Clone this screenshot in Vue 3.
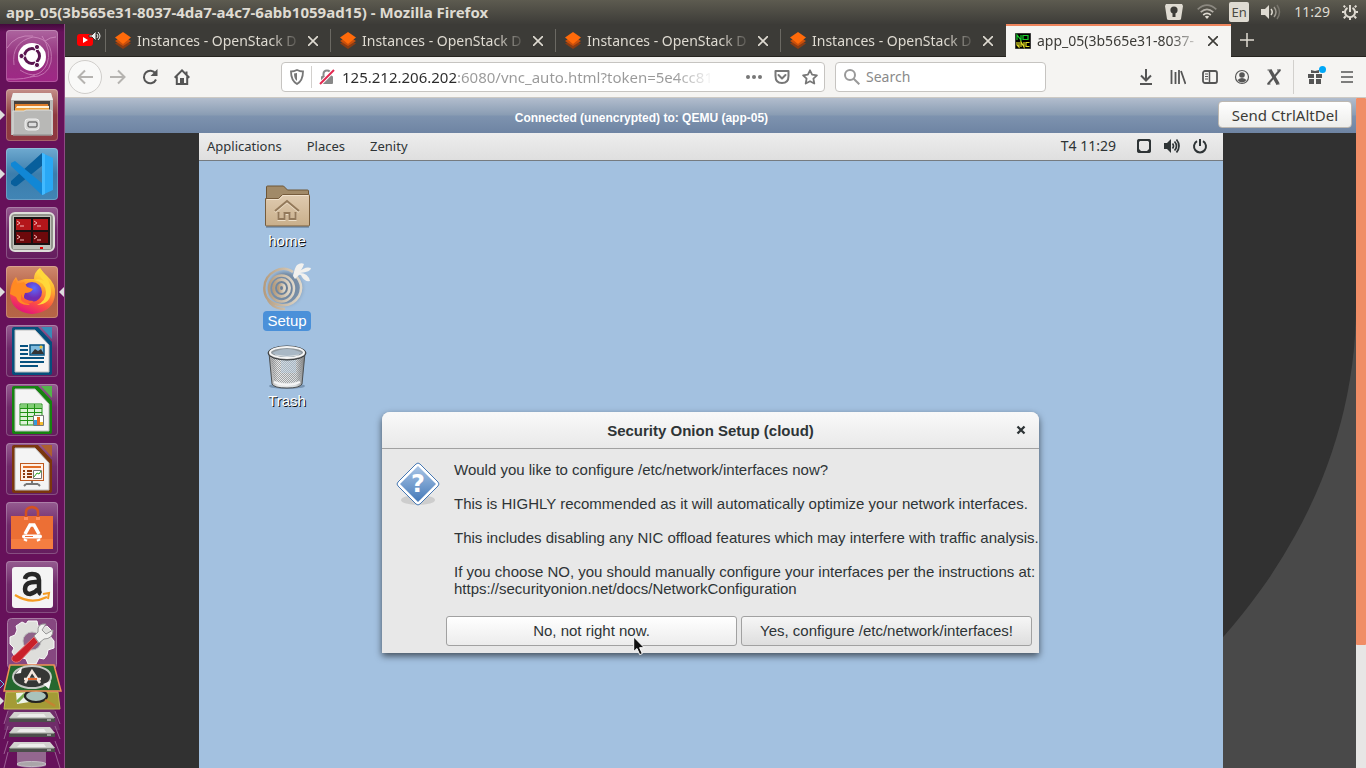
<script setup>
import { ref } from 'vue'

const openTabs = [1, 2, 3, 4]
const address = ref('125.212.206.202:6080/vnc_auto.html?token=5e4cc81e')
const search = ref('')
const message = [
  'Would you like to configure /etc/network/interfaces now?',
  'This is HIGHLY recommended as it will automatically optimize your network interfaces.',
  'This includes disabling any NIC offload features which may interfere with traffic analysis.',
]
</script>

<template>
  <div class="session">
    <header class="topbar">
      <h1 class="window-title">app_05(3b565e31-8037-4da7-a4c7-6abb1059ad15) - Mozilla Firefox</h1>
      <div class="indicators">
        <svg width="18" height="18" viewBox="0 0 18 18"><path d="M1 1h16l1 2-2 13q0 1-2 1H4q-2 0-2-1L0 3z" fill="#dfdbd2" /><circle cx="9" cy="7" r="3.6" fill="#3c3b37" /><path d="M7.500 9h3v5h-3z" fill="#3c3b37" /></svg>
        <svg class="wifi" width="20" height="16" viewBox="0 0 20 16" fill="none" stroke="#dfdbd2" stroke-width="1.7"><path d="M.7 5.4Q10-3 19.3 5.4" stroke="#8b8880" /><path d="M3.700 8.200Q10 2.600 16.300 8.200" stroke="#b5b1a9" /><path d="M6.200 11Q10 7.600 13.800 11" /><path d="M7.800 12.600 10 15l2.200-2.400Q10 11.100 7.800 12.600Z" fill="#dfdbd2" stroke="none" /></svg>
        <span class="lang">En</span>
        <svg class="volume" width="20" height="16" viewBox="0 0 20 16" fill="none" stroke-width="1.5"><path d="M0 5h4l4-4v14l-4-4H0z" fill="#dfdbd2" /><path d="M10 5q2.400 3 0 6" stroke="#dfdbd2" /><path d="M13 3q4 5 0 10" stroke="#a09c93" /><path d="M16 1q5 7 0 14" stroke="#77746c" /></svg>
        <time>11:29</time>
        <svg width="16" height="16" viewBox="0 0 16 16" fill="none" stroke="#dfdbd2"><path d="M5.500 3.800A5 5 0 1 0 10.500 3.800M8 1v7" stroke-width="2" /><path d="M3.200 3.200 1.600 1.600M12.800 3.200l1.600-1.600M2.600 8H0M13.400 8H16M3.700 12.300l-1.900 1.900M12.300 12.300l1.900 1.900M8 13.500V16" stroke-width="2" /></svg>
      </div>
    </header>

    <div class="workspace">
      <nav class="launcher" aria-label="Launcher">
        <button class="tile dash" aria-label="Search your computer">
          <svg viewBox="0 0 52 52"><g fill="none" stroke="#e3a9d4" opacity=".55"><path d="M8 35Q5 12 27 7q21 2 18 25Q42 47 24 47" /><path d="M14 40q18 12 27-6 5-13-5-28" /><path d="M1 49Q20 50 29 45M1 18Q10 4 27 6M50 7q-6 0-11 4" /></g><circle cx="26" cy="27" r="14" fill="#fff" /><circle cx="26" cy="26" r="7.500" fill="none" stroke="#5a1550" stroke-width="3" /><path d="m26 26-11 0M26 26l6-10M26 26l6 10" stroke="#fff" stroke-width="1.200" /><circle cx="26" cy="26" r="5.500" fill="#fff" /><g fill="#5a1550" stroke="#fff"><circle cx="15.500" cy="26" r="2.600" /><circle cx="31" cy="17" r="2.600" /><circle cx="31" cy="35" r="2.600" /></g></svg>
        </button>
        <button class="tile files running" aria-label="Files">
          <svg viewBox="0 0 52 52"><path d="M7 4h38l2 7v35H5V11z" fill="#b9b9b7" /><path d="M7 4h38l2 7H5z" fill="#efefec" /><path d="M8 12h36v12H8z" fill="#46413d" /><path d="M9 15h33l1 7H9z" fill="#de7d2a" /><path d="M11 17h32v2H10z" fill="#fff2d8" /><path d="M9 19h34v3H9z" fill="#f0a33d" /><path d="M7 22h11l2-1h24l2 1v24H7z" fill="#b8b8b6" stroke="#dededb" /><path d="M7 46h39" stroke="#777" /><rect x="19" y="30" width="14" height="11" rx="3" fill="#d8d8d6" stroke="#efefef" /><rect x="22" y="33" width="9" height="5" rx="1" fill="#ddd" stroke="#444" /></svg>
        </button>
        <button class="tile code running" aria-label="Visual Studio Code">
          <svg viewBox="0 0 52 52"><path d="m36 5 11 5v32l-11 5z" fill="#29a8f5" /><path d="M36 5 5 33v3l3 2q2 1 4-1L37 17z" fill="#075f9c" /><path d="m36 47-31-29v-3l4-2 28 23z" fill="#1187d5" /><path d="M36 5v42l3-1V6z" fill="#42baff" /></svg>
        </button>
        <button class="tile terminator" aria-label="Terminator">
          <svg viewBox="0 0 52 52"><rect x="4" y="6" width="44" height="38" rx="5" fill="#92948c" stroke="#deded9" stroke-width="2" /><path d="M7 9h38v33H7z" fill="#c0c2ba" /><path d="M8 10h36v28H8z" fill="#191112" /><path d="M10 12h15v11H10zM27 12h15v11H27z" fill="#b4161a" /><path d="M10 25h15v11H10zM27 25h15v11H27z" fill="#6d090b" /><path d="m11 14 3 2-3 2M28 14l3 2-3 2M11 28l3 2-3 2M28 28l3 2-3 2M14 19h4M31 19h4M14 33h4M31 33h4" stroke="#f3b4b4" fill="none" /><path d="M34 41h3" stroke="#d00" stroke-width="2" /></svg>
        </button>
        <button class="tile firefox running focused" aria-label="Firefox">
          <svg viewBox="0 0 52 52"><defs><linearGradient id="fxBody" x1=".8" y1="0" x2=".4" y2="1"><stop stop-color="#fff44f" /><stop offset=".35" stop-color="#ffb32d" /><stop offset=".7" stop-color="#ff563d" /><stop offset="1" stop-color="#e4157a" /></linearGradient><radialGradient id="fxGlobe" cx=".6" cy=".3"><stop stop-color="#5a6dff" /><stop offset="1" stop-color="#722bb2" /></radialGradient></defs><path d="M34 2q2 4 7 8 9 8 8 18-1 18-23 20-21-2-22-20 0-10 6-17l2 4 7-2 9 0Q28 6 34 2Z" fill="url(#fxBody)" /><circle cx="26" cy="26" r="10" fill="url(#fxGlobe)" /><path d="M4 28q1-10 6-15l1 5 7-2 3 5 6 2q-2 4-8 4-4 7 5 12-11 1-14-8Z" fill="#ff8a22" /><path d="M28 14q11 2 12 12 0 9-9 13 14-1 14-14Q45 15 34 2q-3 7 4 13-4-3-10-1Z" fill="#ffd83a" /><path d="M15 28q2 7 13 7-7 6-13-1Z" fill="#ff6534" /></svg>
        </button>
        <button class="tile" aria-label="LibreOffice Writer">
          <svg viewBox="0 0 52 52"><path d="M8 2h24l14 15v31q0 2-2 2H8q-2 0-2-2V4q0-2 2-2Z" fill="#064f7c" /><path d="M35 2h11v12z" fill="#398ab7" /><path d="M9 5h20l14 15v27H9z" fill="#f4f4f4" stroke="#bbb" /><path d="M14 21h8M14 25h8M14 29h8M14 33h24M14 37h24M14 41h18" stroke="#07527f" stroke-width="2" /><path d="M24 20h14v10H24z" fill="#7dbbde" stroke="#07527f" stroke-width="1.500" /><path d="m25 29 4-5 3 2 3-2 3 5z" fill="#333" /><circle cx="35" cy="22" r="1.500" fill="#f2c12e" /></svg>
        </button>
        <button class="tile" aria-label="LibreOffice Calc">
          <svg viewBox="0 0 52 52"><path d="M8 2h24l14 15v31q0 2-2 2H8q-2 0-2-2V4q0-2 2-2Z" fill="#168310" /><path d="M35 2h11v12z" fill="#54b44a" /><path d="M9 5h20l14 15v27H9z" fill="#f4f4f4" stroke="#bbb" /><path d="M14 20h22v21H14z" fill="#dcf2d6" stroke="#1f9114" /><path d="M15 21h20v3H15z" fill="#80cf73" /><path d="M14 24.500h22M14 28.500h22M14 32.500h22M14 36.500h22M21.500 20v21M28.500 20v21" stroke="#1f9114" /><path d="M27.500 31.500h10v10h-10z" fill="#fff" stroke="#777" /><path d="M28 36h3v5h-3z" fill="#3498db" /><path d="M31 33h3v8h-3z" fill="#e56b23" /><path d="M34 38h3v3h-3z" fill="#f5bd2f" /></svg>
        </button>
        <button class="tile" aria-label="LibreOffice Impress">
          <svg viewBox="0 0 52 52"><path d="M8 2h24l14 15v31q0 2-2 2H8q-2 0-2-2V4q0-2 2-2Z" fill="#7b360d" /><path d="M35 2h11v12z" fill="#ad6030" /><path d="M9 5h20l14 15v27H9z" fill="#f4f4f4" stroke="#bbb" /><rect x="14.500" y="20.500" width="23" height="17" fill="#fff0e5" stroke="#be581e" /><path d="M17 24h18" stroke="#e06c25" stroke-width="2" /><path d="M17 28h2M17 31h2M17 34h2M21 28h5M21 31h5M21 34h5" stroke="#8d3a0c" stroke-width="2" /><path d="M27.500 27.500h8v8h-8z" fill="#fff" stroke="#777" /><path d="m28 34 3-4 2 1 2-3" stroke="#27a521" fill="none" /><path d="M26 38v3M20 41h12M20 41l-2 2M32 41l2 2" stroke="#777" stroke-width="2" /></svg>
        </button>
        <button class="tile" aria-label="Ubuntu Software">
          <svg viewBox="0 0 52 52"><path d="M5 14h42v33H5z" fill="#ec6f35" /><path d="M5 37h42v10H5z" fill="#f57e41" /><path d="M20 18v-8q0-4 6-5 6 1 6 5v8" fill="none" stroke="#d45120" stroke-width="2.500" /><path d="M18 15h4v3h-4zM30 15h4v3h-4z" fill="#ff9060" /><path d="m19 32 5-9h4l5 9M19 39l1-2M33 39l-1-2" fill="none" stroke="#fff" stroke-width="3.500" /><path d="M18 34.500h16" stroke="#fff" stroke-width="4" stroke-linecap="round" /><path d="M19 34.500h8" stroke="#ec6f35" /></svg>
        </button>
        <button class="tile" aria-label="Amazon">
          <svg viewBox="0 0 52 52"><rect x="6" y="6" width="41" height="41" rx="3" fill="#f4f4f4" /><path d="M19 18q1-5 7-5 7 0 7 6v10q0 3 2 4" fill="none" stroke="#272727" stroke-width="4.500" /><path d="M32 21q-13-1-13 7 0 5 5 5 5-1 8-5" fill="none" stroke="#272727" stroke-width="4.500" /><path d="M9 34q16 10 32 2" fill="none" stroke="#f59b22" stroke-width="2.200" /><path d="m37 33 6-1-1 6" fill="none" stroke="#f59b22" stroke-width="2" /></svg>
        </button>
        <div class="stack">
          <svg viewBox="0 0 65 150" width="65" height="150" role="img" aria-label="Folded launcher items">
            <path d="M17 131h29v17q-14 4-29 0z" fill="#94678f" /><ellipse cx="31.500" cy="146" rx="14.500" ry="2.500" fill="#aaa5a9" stroke="#c5bdc5" />
            <path d="M8 134 4 150M55 134l5 16" stroke="#9b6094" />
            <g transform="translate(0 -4)">
              <rect x="7.500" y="4.500" width="49" height="50" rx="4" fill="#864780" stroke="#a87ca4" />
              <path d="m28 7 9 0 1 5 5 2 4-2 5 5-2 5 4 5v7l-6 2-1 5-3 4-5-1-3 6h-8l-2-5-6-2-4 1-4-6 2-4-4-4v-7l5-2 2-5-1-4 6-4 4 2z" fill="#dededb" stroke="#fafafa" />
              <circle cx="32" cy="27" r="9" fill="#8f6389" stroke="#bbb" />
              <path d="M12 46q-1-4 3-5l19-18 4 5-18 19q-5 3-8-1Z" fill="#c9202a" stroke="#e56d70" />
              <path d="m34 22 4-4q-1-9 8-8l-4 6 4 4 7-4q0 9-9 9l-5 4z" fill="#f0f0ee" stroke="#999" />
              <path d="M8 94h46l6 22H4z" fill="#6f2c69" />
              <g v-for="y in [97, 112, 127]" :key="y" :transform="`translate(0 ${y})`"><path d="M8 0 4 13M55 0l5 13" stroke="#9b6094" /><path d="M14 1h36l5 6H9z" fill="#d2d3cf" /><path d="M20 3h24l2 3H17z" fill="#ededeb" /><path d="M9 7h46v4H9z" fill="#4c4e4b" /><path d="M10 7h44" stroke="#b8bbb4" /><path d="M47 9h4" stroke="#eee" /></g>
              <path d="M6 78h52l2 17H4z" fill="#a49b36" stroke="#c4bc58" />
              <path d="m16 79 18-1 2 9-19 3z" fill="#eef3e8" /><path d="m17 88 7-7 5 5 5-6" stroke="#72a84a" stroke-width="3" fill="none" />
              <ellipse cx="36" cy="82" rx="11" ry="6" fill="#a9c3bb" stroke="#222" stroke-width="2.200" /><path d="m45 86 10 6" stroke="#c48432" stroke-width="2.500" />
              <path d="M10 51h44l7 26H4z" fill="#25672e" stroke="#ef9256" stroke-width="1.500" />
              <ellipse cx="32" cy="63" rx="19" ry="11" fill="#353735" stroke="#c6c9c4" stroke-width="2" />
              <path d="m25 69 7-12 8 12M24 65h17" stroke="#f3e6dd" stroke-width="2.500" fill="none" /><path d="M28 65h9" stroke="#e7682f" stroke-width="2" />
              <path d="m15 60 7-7-1 6zM43 70l8-3-2 8z" fill="#f5f5f5" />
              <path d="m0 66 4 4-4 4" fill="none" stroke="#64c7e8" /><path d="m0 83 4 4-4 4z" fill="#ddd" />
            </g>
          </svg>
        </div>
      </nav>

      <main class="browser">
        <div class="tabs">
          <button class="pinned" aria-label="YouTube, playing audio">
            <svg width="24" height="18" viewBox="0 0 24 18"><rect x="0" y="4" width="16" height="12" rx="3" fill="#f00" /><path d="m6 7 5 3-5 3z" fill="#fff" /><path d="M12 5h3l4-4v10l-4-4h-3z" fill="#eee" stroke="#353430" /><path d="M20 4q2 2 0 4M21 2q4 4 0 8" fill="none" stroke="#eee" /></svg>
          </button>
          <div v-for="tab in openTabs" :key="tab" class="tab">
            <svg width="16" height="18" viewBox="0 0 16 18"><path d="m8 7 8 4.500L8 17l-8-5.500z" fill="#8a3c13" /><path d="m8 4 8 5-8 5-8-5z" fill="#c94f0c" /><path d="m8 0 8 5.500L8 12 0 5.500z" fill="#ff6a0a" /></svg>
            <span>Instances - OpenStack D</span>
            <button class="close" aria-label="Close tab"><svg width="10" height="10" viewBox="0 0 10 10"><path d="m0 0 10 10M10 0 0 10" /></svg></button>
          </div>
          <div class="tab active">
            <svg width="16" height="16" viewBox="0 0 16 16" fill="none"><path d="M0 0h16v16H0z" fill="#000" stroke="#777" /><path d="M2 7V2l4 5V2M8 2.500h5v4H8z" stroke="#19d12b" stroke-width="1.200" /><path d="M2 9v3l2 2V9M6 14V9l3 5V9M14.500 9.500H11v4h3.500" stroke="#e2dc24" stroke-width="1.200" /></svg>
            <span>app_05(3b565e31-8037-</span>
            <button class="close" aria-label="Close tab"><svg width="10" height="10" viewBox="0 0 10 10"><path d="m0 0 10 10M10 0 0 10" /></svg></button>
          </div>
          <button class="newtab" aria-label="New tab"><svg width="14" height="14" viewBox="0 0 14 14"><path d="M7 0v14M0 7h14" stroke="#dfdbd2" stroke-width="1.500" /></svg></button>
        </div>

        <div class="toolbar">
          <button class="back" aria-label="Back"><svg class="ic" viewBox="0 0 16 16"><path d="M16 8H2M8 1.500 1.500 8 8 14.500" /></svg></button>
          <button class="tool faint" aria-label="Forward"><svg class="ic" viewBox="0 0 16 16"><path d="M0 8h14M8 1.500 14.500 8 8 14.500" /></svg></button>
          <button class="tool" aria-label="Reload"><svg class="ic" viewBox="0 0 16 16"><path d="M13.500 4.500A6.300 6.300 0 1 0 14 10.500" /><path d="M15.500 0v7h-7z" fill="#555" stroke="none" /></svg></button>
          <button class="tool" aria-label="Home"><svg class="ic" viewBox="0 0 16 16"><path d="M.7 8.700 8 1.400l7.300 7.300M2.800 7.500V15h10.400V7.500" /><path d="M6 9h4v6H6z" fill="#555" stroke="none" /><path d="M12.500 2.500v3" /></svg></button>

          <div class="field address">
            <svg width="14" height="16" viewBox="0 0 14 16" fill="none" stroke="#777" stroke-width="1.800"><path d="M7 1q3 1.500 6 1.500 0 9-6 12.500Q1 11.500 1 2.500 4 2.500 7 1Z" /><path d="M7 4v8q-3-2-3-7.500z" fill="#777" stroke="none" /></svg>
            <i class="rule"></i>
            <svg width="16" height="16" viewBox="0 0 16 16" fill="none"><path d="M4.500 8V5q0-3.500 3.500-3.500T11.500 5v3" stroke="#888" stroke-width="2" /><rect x="2" y="7" width="12" height="8" rx="1" fill="#888" /><path d="M1 15 15 1" stroke="#fff" stroke-width="4" /><path d="M1 15 15 1" stroke="#e22850" stroke-width="2" /></svg>
            <input v-model="address" aria-label="Address" spellcheck="false">
            <button aria-label="Page actions"><svg width="16" height="16" viewBox="0 0 16 16" fill="#777"><circle cx="2" cy="8" r="2" /><circle cx="8" cy="8" r="2" /><circle cx="14" cy="8" r="2" /></svg></button>
            <button aria-label="Save to Pocket"><svg width="16" height="16" viewBox="0 0 16 16" fill="none" stroke="#777" stroke-width="2" stroke-linecap="round" stroke-linejoin="round"><path d="M1.500 2h13v5q0 7-6.500 7T1.500 7z" /><path d="m4.500 6 3.500 3.500L11.500 6" /></svg></button>
            <button aria-label="Bookmark this page"><svg width="16" height="16" viewBox="0 0 16 16" fill="none" stroke="#777" stroke-width="1.800" stroke-linejoin="round"><path d="m8 1.300 2.100 4.300 4.800.7-3.500 3.400.9 4.800L8 12.200l-4.300 2.300.9-4.800L1.100 6.300l4.800-.7z" /></svg></button>
          </div>
          <div class="field search">
            <svg width="16" height="16" viewBox="0 0 16 16" fill="none" stroke="#999" stroke-width="2"><circle cx="6" cy="6" r="5" /><path d="m9.700 9.700 5.600 5.600" /></svg>
            <input v-model="search" aria-label="Search" placeholder="Search">
          </div>

          <div class="tools">
            <button class="tool" aria-label="Downloads"><svg class="ic" viewBox="0 0 16 16"><path d="M8 0v11M3 6.500 8 11.500l5-5M2 15h12" /></svg></button>
            <button class="tool" aria-label="Library"><svg class="ic" viewBox="0 0 16 16"><path d="M1.500 1v14M5.500 3v12M9 1v14M11 2l4.500 13" stroke-width="1.800" /></svg></button>
            <button class="tool" aria-label="Sidebars"><svg class="ic" viewBox="0 0 16 16"><rect x="1" y="2" width="14" height="12" rx="2" stroke-width="1.800" /><path d="M7.500 2v12" stroke-width="1.500" /><path d="M3 5h3M3 7.500h3M3 10h3" stroke-width="1" /></svg></button>
            <button class="tool" aria-label="Account"><svg class="ic" viewBox="0 0 16 16"><circle cx="8" cy="8" r="6.500" stroke-width="1.200" /><circle cx="8" cy="6" r="2.800" fill="#555" stroke="none" /><path d="M3.500 11q4.500-4 9 0-4.500 5-9 0Z" fill="#555" stroke="none" /></svg></button>
            <button class="tool" aria-label="Extension"><svg class="ic" viewBox="0 0 16 16"><path d="M4 1 12 15" stroke-width="3.500" /><path d="M14 1 2 15" stroke-width="2" /><path d="M1.500 1h4M11 1h4M1 15h3.500M10 15h3.500" stroke-width="1.200" /></svg></button>
            <i class="rule tall"></i>
            <button class="tool gift" aria-label="What's new"><svg class="ic" viewBox="0 0 16 16"><path d="M1 5h6v4H1zM9 5h6v4H9zM2 10h5v5H2zM9 10h5v5H9zM4 1l4 1 4-1v3H4z" fill="#555" stroke="none" /></svg></button>
            <button class="tool" aria-label="Menu"><svg class="ic" viewBox="0 0 16 16"><path d="M2 3h12M2 8h12M2 13h12" stroke-width="1.700" /></svg></button>
          </div>
        </div>

        <div class="viewport">
          <div class="page">
            <div class="statusbar">
              <p>Connected (unencrypted) to: QEMU (app-05)</p>
              <button>Send CtrlAltDel</button>
            </div>
            <div class="container">
              <section class="desktop">
                <div class="panel">
                  <button>Applications</button>
                  <button>Places</button>
                  <button>Zenity</button>
                  <time>T4 11:29</time>
                  <svg width="16" height="16" viewBox="0 0 16 16" fill="none" stroke="#2e3436" stroke-width="2"><rect x="2" y="2" width="12" height="12" rx="1" /><path d="M2 12v2h2v-2zM12 12v2h2v-2zM2 5V2h2zM14 5V2h-2z" fill="#2e3436" stroke-width="1" /></svg>
                  <svg width="16" height="16" viewBox="0 0 16 16" fill="none" stroke="#2e3436" stroke-width="1.700"><path d="M0 5h3l4-4v14l-4-4H0z" fill="#2e3436" stroke="none" /><path d="M8.500 5.500q2 2.500 0 5M10.500 3.500q4 4.500 0 9M12.500 1.500q5 6.500 0 13" /></svg>
                  <svg width="16" height="16" viewBox="0 0 16 16" fill="none" stroke="#2e3436" stroke-width="2"><path d="M5 3.200a6 6 0 1 0 6 0M8 1v7" /></svg>
                </div>

                <div class="shortcuts">
                  <button class="shortcut">
                    <svg width="48" height="48" viewBox="0 0 48 48"><defs><linearGradient id="folderFront" x2="0" y2="1"><stop stop-color="#dfcbb0" /><stop offset="1" stop-color="#c9af8b" /></linearGradient></defs><path d="M3 45h43" stroke="#55708e" opacity=".5" stroke-width="2" /><path d="M3.500 26V5q0-1 1-1h16l4 4h20q1 0 1 1v17z" fill="#a18a68" stroke="#6e5636" /><path d="M2.500 16.500h13l4-4h26q1 0 1 1V43q0 1-1 1h-42q-1 0-1-1z" fill="url(#folderFront)" stroke="#765c3c" /><path d="M4 17.500h12l4-4h25" stroke="#f1e2cd" fill="none" /><g fill="none" stroke-width="2"><path d="m12 30 12-10 12 10M15.500 31v7h6v-6h5v6h6v-7" stroke="#eddfc9" /><path d="m12 29 12-10 12 10M15.500 30v7h6v-6h5v6h6v-7" stroke="#93795a" /></g></svg>
                    <span>home</span>
                  </button>
                  <button class="shortcut selected">
                    <svg width="48" height="48" viewBox="0 0 48 48"><defs><radialGradient id="onionHaze"><stop stop-color="#66798f" /><stop offset=".65" stop-color="#7990a9" /><stop offset="1" stop-color="#a4c2e0" stop-opacity="0" /></radialGradient><linearGradient id="onionRing"><stop stop-color="#b59c7e" /><stop offset="1" stop-color="#dfd8cb" /></linearGradient></defs><path d="M0 4h44v44H0z" fill="url(#onionHaze)" /><g fill="none" stroke="url(#onionRing)"><ellipse cx="18.500" cy="26" rx="3" ry="3.500" stroke-width="3" /><ellipse cx="18.500" cy="26" rx="8" ry="8.500" stroke-width="3" /><ellipse cx="18.500" cy="26.500" rx="12.500" ry="13" stroke-width="2.500" /><path d="M31 12q11 10 5 22-7 11-19 9Q3 41 1.500 29 0 15 12 9q10-5 18 1M5 38q5 9 17 9" stroke-width="2.500" /></g><path d="M30 14q2-9 4-11 4-3 7-1-2 6-5 8 6-6 12-4 0 4-11 5 8 0 10 8-5 1-8-4-1-3-3-2l-4 4z" fill="#f2f1ee" /></svg>
                    <span>Setup</span>
                  </button>
                  <button class="shortcut">
                    <svg width="48" height="48" viewBox="0 0 48 48"><defs><pattern id="mesh" width="2" height="2" patternUnits="userSpaceOnUse"><path d="M0 0h1v1H0zM1 1h1v1H1z" fill="#85888a" /></pattern><linearGradient id="bin"><stop stop-color="#999" /><stop offset=".25" stop-color="#e8e8e8" /><stop offset=".75" stop-color="#d9dddf" /><stop offset="1" stop-color="#777" /></linearGradient></defs><ellipse cx="24" cy="44" rx="18" ry="3" fill="#425b75" opacity=".45" /><path d="m6 11 3 31q2 4 15 4t15-4l3-31z" fill="url(#bin)" stroke="#4c5052" /><path d="m8 14 3 24q3 3 13 3t13-3l3-24z" fill="url(#mesh)" opacity=".7" /><path d="M18 18h15v13H18z" fill="#b5cbe0" opacity=".45" /><path d="M11 40q13 6 26 0" fill="none" stroke="#f5f5f5" stroke-width="2" /><ellipse cx="24" cy="11" rx="19" ry="7" fill="#777" stroke="#34383a" /><ellipse cx="24" cy="10.500" rx="17" ry="5.500" fill="#8f979c" stroke="#f5f5f5" stroke-width="2" /><path d="M9 11q15-8 30 0-15 8-30 0Z" fill="#a9b8c5" /><path d="M12 13q12 3 24 0" stroke="#d7dde1" fill="none" /></svg>
                    <span>Trash</span>
                  </button>
                </div>

                <div class="dialog" role="dialog" aria-labelledby="dialog-title">
                  <div class="dialog-head">
                    <h2 id="dialog-title">Security Onion Setup (cloud)</h2>
                    <button aria-label="Close"><svg width="10" height="10" viewBox="0 0 10 10"><path d="m1.500 1.500 7 7M8.500 1.500l-7 7" stroke="#2e3436" stroke-width="2.300" /></svg></button>
                  </div>
                  <div class="dialog-body">
                    <svg width="48" height="48" viewBox="0 0 48 48"><defs><linearGradient id="askFill" x2="0" y2="1"><stop stop-color="#a9c5e6" /><stop offset="1" stop-color="#4479b8" /></linearGradient></defs><ellipse cx="24" cy="40" rx="17" ry="5" fill="#bbb" opacity=".6" /><path d="m22 4 q2-2 4 0l18 18q2 2 0 4L26 44q-2 2-4 0L4 26q-2-2 0-4z" fill="#fff" stroke="#4778b3" /><path d="m24 6 18 18-18 18L6 24z" fill="url(#askFill)" /><text x="24" y="32" text-anchor="middle">?</text></svg>
                    <div class="message">
                      <p v-for="line in message" :key="line">{{ line }}</p>
                      <p>If you choose NO, you should manually configure your interfaces per the instructions at:<br>https://securityonion.net/docs/NetworkConfiguration</p>
                    </div>
                  </div>
                  <div class="dialog-actions">
                    <button class="hover">No, not right now.</button>
                    <button>Yes, configure /etc/network/interfaces!</button>
                  </div>
                </div>
                <svg class="pointer" width="13" height="20" viewBox="0 0 13 20"><path d="M.7 1v14.500l3.300-3 2.700 6.200 2.600-1.200-2.700-5.800h4.600z" fill="#111" stroke="#fff" /></svg>
              </section>
            </div>
          </div>
          <div class="scrollbar"><i></i></div>
        </div>
      </main>
    </div>
  </div>
</template>

<style>
body { overflow: hidden; }
</style>

<style scoped>
* { box-sizing: border-box; }
button, input { font: inherit; color: inherit; border: 0; background: none; padding: 0; margin: 0; }
button { display: flex; align-items: center; justify-content: center; }
h1, h2, p { margin: 0; }
svg { flex: none; display: block; }

.session { height: 100vh; display: flex; flex-direction: column; overflow: hidden; font: 14px/20px "Noto Sans", sans-serif; color: #3c3b37; }

.topbar { height: 24px; flex: none; display: flex; justify-content: space-between; align-items: center; padding: 0 8px 0 6px; background: linear-gradient(#5d5b50, #3d3c38); color: #dfdbd2; }
.window-title { font-size: 15px; font-weight: 700; white-space: nowrap; }
.indicators { display: flex; align-items: center; }
.wifi { margin-left: 14px; }
.lang { margin: 0 12px; width: 20px; height: 20px; border-radius: 2px; background: #dfdbd2; color: #4a4944; text-align: center; font-size: 13px; }
.indicators time { margin: 0 12px 0 13px; }

.workspace { flex: 1; min-height: 0; display: flex; }
.launcher { width: 65px; flex: none; overflow: hidden; display: flex; flex-direction: column; gap: 7px; padding-top: 6px; background: linear-gradient(#43093c, #66115a 8px, #66115a); border-right: 1px solid #8d4b83; }
.tile { position: relative; width: 52px; height: 52px; flex: none; margin-left: 6px; border-radius: 4px; background: linear-gradient(#955c90, #702a6a 45%, #651d5e); box-shadow: inset 0 0 0 1px rgba(255, 255, 255, .22); }
.tile svg { width: 52px; height: 52px; }
.dash { background: linear-gradient(#ad659f, #95327f 50%, #a02786); }
.files { background: linear-gradient(#c49089, #8e3a3f 50%, #8f3840); }
.code { background: linear-gradient(#6faad0, #3b7dac 50%, #4185b5); }
.firefox { background: linear-gradient(#cf896e, #b35f43 50%, #b66547); }
.running::before { content: ""; position: absolute; left: -6px; top: 21px; border: 5px solid transparent; border-left-color: #ddd; border-right: 0; }
.focused::after { content: ""; position: absolute; right: -6px; top: 21px; border: 5px solid transparent; border-right-color: #ddd; border-left: 0; }
.stack { margin-top: -2px; }

.browser { flex: 1; min-width: 0; display: flex; flex-direction: column; }
.tabs { height: 33px; flex: none; display: flex; background: #3c3b37; color: #dfdbd2; border-bottom: 1px solid #26241f; }
.pinned { width: 41px; padding: 0 0 2px 6px; }
.tab { position: relative; flex: 0 1 225px; min-width: 0; display: flex; align-items: center; gap: 6px; padding: 2px 13px 0 9px; }
.tab::before { content: ""; position: absolute; left: -1px; top: 5px; bottom: 4px; width: 1px; background: #6b6963; }
.tab span { flex: 1; min-width: 0; white-space: nowrap; mask-image: linear-gradient(90deg, #000 calc(100% - 32px), transparent); }
.close { width: 10px; height: 10px; flex: none; }
.close path { stroke: currentColor; stroke-width: 1.6; }
.active { background: #f5f4f2; color: #3c3b37; margin-bottom: -1px; border-top: 2px solid #ef855d; padding-top: 0; padding-bottom: 2px; }
.active::before { display: none; }
.newtab { width: 32px; }

.toolbar { height: 41px; flex: none; display: flex; align-items: center; padding: 0 3px; background: #f5f4f2; border-bottom: 1px solid #ccc9c4; }
.tool { width: 32px; height: 32px; flex: none; position: relative; }
.back { width: 34px; height: 34px; flex: none; border: 1px solid #d0cecb; border-radius: 50%; background: #f9f9f8; }
.ic { width: 16px; height: 16px; fill: none; stroke: #555; stroke-width: 2; }
.back .ic, .faint .ic { stroke: #b5b3b0; }
.field { height: 30px; display: flex; align-items: center; background: #fff; border: 1px solid #c6c4c1; border-radius: 4px; }
.address { flex: 1; min-width: 0; margin: 0 10px 0 83px; padding: 0 0 0 8px; }
.address input { flex: 1; min-width: 0; margin: 0 12px 0 7px; font-size: 15px; color: transparent; background: linear-gradient(90deg, #2b2b2b 115px, #999 115px, #999 calc(100% - 54px), transparent calc(100% - 14px)) text; }
.address button { width: 28px; }
.rule { width: 1px; height: 22px; flex: none; margin: 0 7px; background: #d2d0cd; }
.search { width: 211px; padding-left: 8px; gap: 6px; }
.search input { flex: 1; min-width: 0; }
.search input::placeholder { color: #8a8a8a; opacity: 1; }
.tools { display: flex; align-items: center; margin-left: 84px; }
.tall { height: 34px; margin: 0 5px 0 3px; }
.gift::after { content: ""; position: absolute; right: 5px; top: 5px; width: 7px; height: 7px; border-radius: 50%; background: #00a7f7; }

.viewport { flex: 1; min-height: 0; display: flex; overflow: hidden; }
.page { flex: 1; min-width: 0; background: #494949; overflow: hidden; }
.statusbar { height: 35px; display: flex; align-items: center; justify-content: flex-end; padding: 0 4px 2px 0; background: linear-gradient(#b2bdcd, #899cb3 49%, #7e93af 51%, #6e84a3); }
.statusbar p { flex: 1; padding-top: 6px; text-align: center; color: #fff; font: bold 12px/16px "Liberation Sans", Arial, sans-serif; }
.statusbar button { height: 27px; padding: 0 13px; border: 1px solid #bdb8b1; border-radius: 4px; background: linear-gradient(#fff, #ededeb); font-size: 15px; }
.container { height: 773px; display: flex; justify-content: center; padding-left: 1px; background: #313131; border-bottom-right-radius: 800px 600px; }
.scrollbar { width: 10px; flex: none; background: #e7e6e5; }
.scrollbar i { display: block; height: 547px; background: #f08d66; border-radius: 1px; }

.desktop { position: relative; width: 1024px; height: 768px; flex: none; background: #a3c1e0; color: #2e3436; font: 15px/17px "Liberation Sans", Arial, sans-serif; }
.panel { height: 28px; display: flex; align-items: center; gap: 12px; padding: 0 15px 2px 8px; background: linear-gradient(#ededed, #dfdfdf); border-bottom: 1px solid #757b80; font: 13px/18px "Noto Sans", sans-serif; }
.panel button { margin-right: 13px; }
.panel time { margin: 0 8px 0 auto; font-size: 14px; }
.shortcuts { padding: 21px 0 0 53px; display: flex; flex-direction: column; align-items: flex-start; gap: 11px; }
.shortcut { width: 70px; flex-direction: column; gap: 1px; color: #fff; }
.shortcut span { height: 20px; line-height: 20px; padding: 0 4px; border-radius: 4px; text-shadow: 1px 1px #111; }
.selected span { background: #4a90d9; text-shadow: none; }

.dialog { position: absolute; left: 183px; top: 279px; width: 657px; background: #e8e8e8; border-radius: 8px 8px 0 0; box-shadow: 0 3px 7px rgba(0, 0, 0, .6); }
.dialog-head { height: 37px; position: relative; display: flex; align-items: center; background: linear-gradient(#f9f9f9, #e9e9e9); border-bottom: 1px solid #a1a1a1; border-radius: 8px 8px 0 0; }
.dialog-head h2 { flex: 1; text-align: center; font-size: 15px; }
.dialog-head button { position: absolute; right: 13px; top: 13px; }
.dialog-body { display: flex; gap: 12px; padding: 11px 0 0 12px; }
.dialog-body text { font: bold 24px "DejaVu Sans", sans-serif; fill: #fff; }
.message { padding-top: 1px; }
.message p { margin-bottom: 17px; white-space: nowrap; }
.dialog-actions { display: grid; grid-template-columns: 1fr 1fr; gap: 4px; padding: 2px 7px 7px 64px; }
.dialog-actions button { height: 30px; padding-bottom: 2px; border: 1px solid #a1a1a1; border-radius: 3px; background: linear-gradient(#f6f6f6, #dedede); }
.dialog-actions .hover { background: linear-gradient(#fff, #ececec); }
.pointer { position: absolute; left: 434px; top: 503px; }
</style>
